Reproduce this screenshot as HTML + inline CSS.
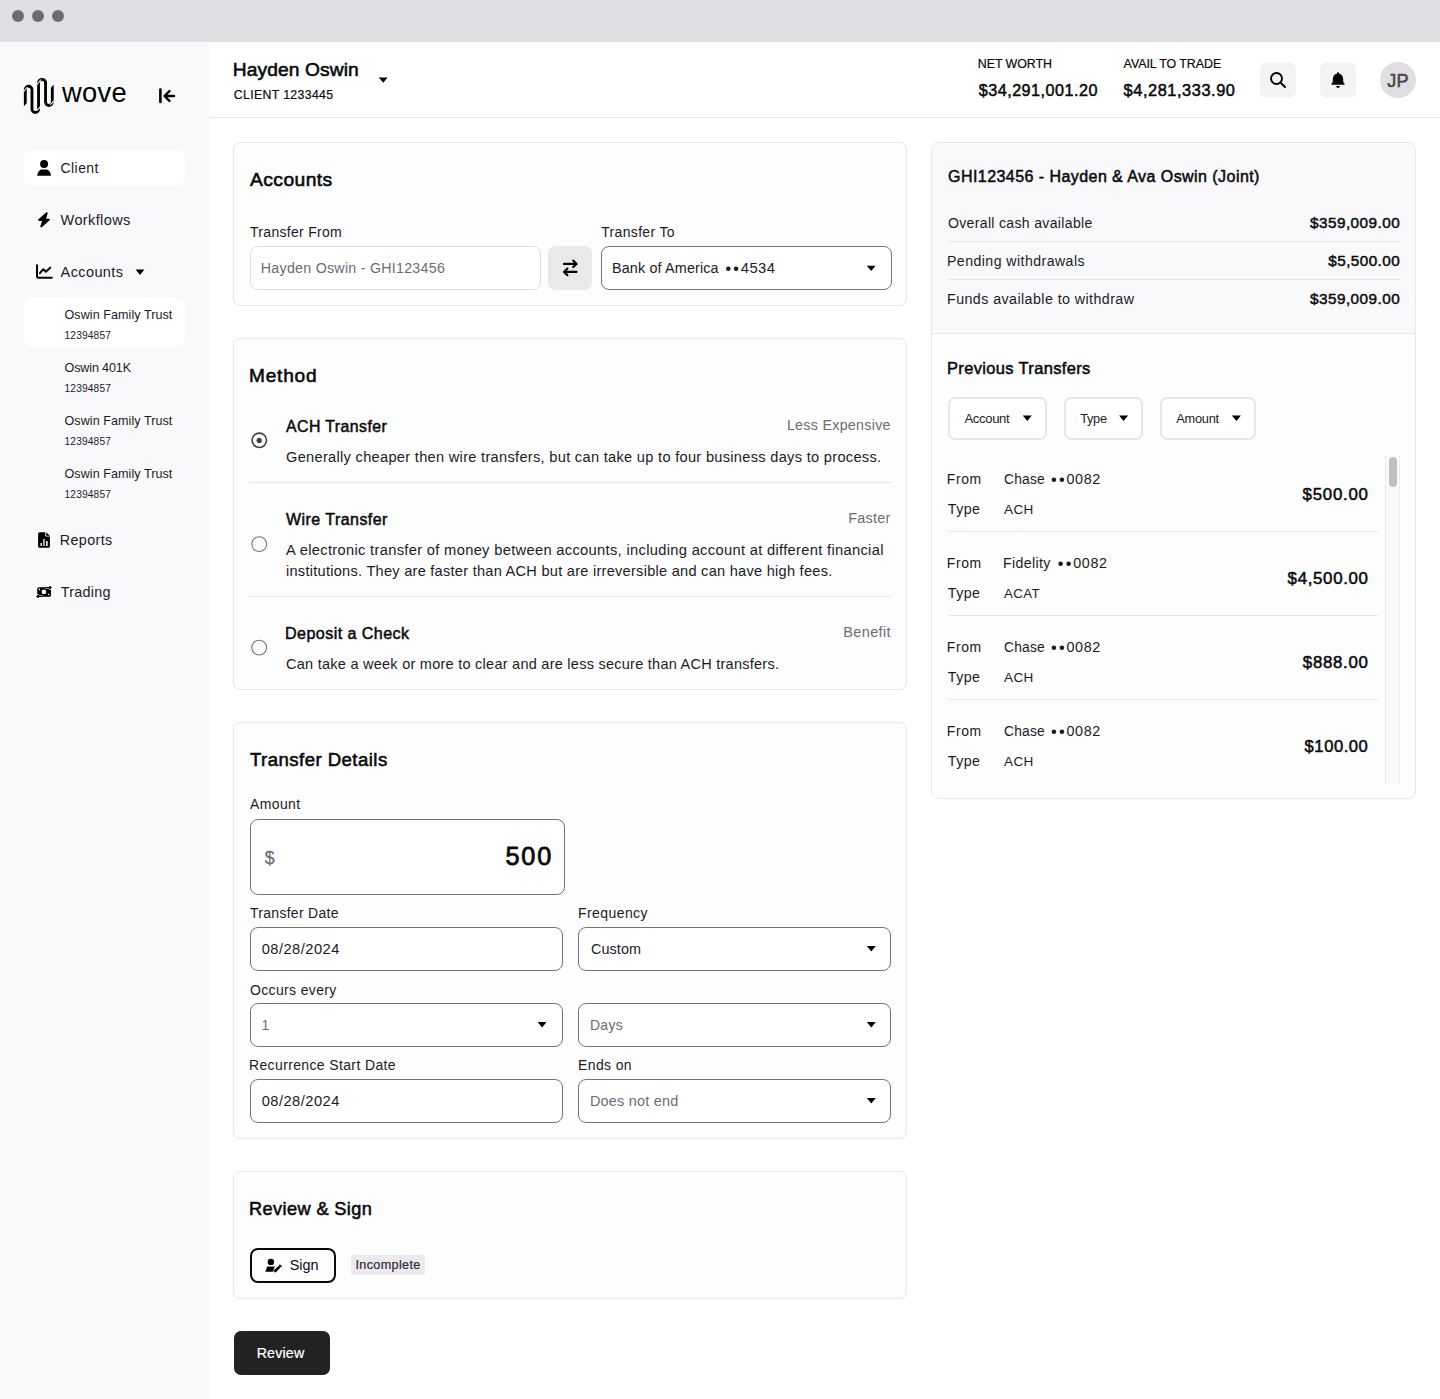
<!DOCTYPE html>
<html><head><meta charset="utf-8"><title>Transfer</title>
<style>
html,body{margin:0;padding:0}
body{width:1440px;height:1399px;position:relative;overflow:hidden;background:#ffffff;font-family:"Liberation Sans",sans-serif}
.t{position:absolute;white-space:nowrap;font-family:"Liberation Sans",sans-serif}
.a{position:absolute;box-sizing:border-box}
.card{position:absolute;box-sizing:border-box;border:1px solid #e8e8eb;border-radius:7px;background:#fdfdfd}
.inp{position:absolute;box-sizing:border-box;border:1px solid #76727d;border-radius:8px;background:#fff}
.hr{position:absolute;height:1px;background:#e6e6e9}
svg{position:absolute;overflow:visible}

</style></head>
<body>
<!-- title bar -->
<div class="a" style="left:0;top:0;width:1440px;height:42px;background:#e1dfe4"></div>
<div class="a" style="left:12px;top:10px;width:12px;height:12px;border-radius:50%;background:#6e6a75"></div>
<div class="a" style="left:32px;top:10px;width:12px;height:12px;border-radius:50%;background:#6e6a75"></div>
<div class="a" style="left:52px;top:10px;width:12px;height:12px;border-radius:50%;background:#6e6a75"></div>
<!-- sidebar -->
<div class="a" style="left:0;top:42px;width:209px;height:1357px;background:#f9f9fb"></div>
<!-- logo -->
<svg style="left:0;top:0" width="200" height="130">
  <path d="M25.3,108 L25.3,89.65 A3.35,3.35 0 0 1 32,89.65 L32,109.25 A3.275,3.275 0 0 0 38.55,109.25 L38.55,82.8 A3.5,3.5 0 0 1 45.55,82.8 L45.55,102.1 A3.375,3.375 0 0 0 52.3,102.1 L52.3,83" fill="none" stroke="#000" stroke-width="2.85"/>
  <path d="M23.4,92 L27.4,87 M36.7,110.6 L40.3,106.8 M36.6,85 L40.9,79.6 M50.4,104.6 L54,100.8" stroke="#f9f9fb" stroke-width="1.15"/>
  <path d="M22,107.9 L28,101.9 L28,112 L22,112 Z M49.5,89.1 L55.5,83.1 L55.5,80 L49.5,80 Z" fill="#f9f9fb"/>
</svg>
<svg style="left:0;top:0" width="200" height="130">
  <path d="M160.4,89.5 L160.4,102" stroke="#000" stroke-width="2.6" stroke-linecap="round"/>
  <path d="M174,96 L165,96 M169.5,91 L164.5,96 L169.5,101" fill="none" stroke="#000" stroke-width="2.4" stroke-linecap="round" stroke-linejoin="round"/>
</svg>
<!-- nav highlight -->
<div class="a" style="left:24px;top:150px;width:161px;height:35.5px;border-radius:8px;background:#ffffff"></div>
<div class="a" style="left:24px;top:298px;width:161px;height:48.5px;border-radius:8px;background:#ffffff"></div>
<!-- nav icons -->
<svg style="left:0;top:0" width="209" height="620">
  <circle cx="44.1" cy="163.9" r="4" fill="#000"/>
  <path d="M37.2,175.8 C37.6,172 39.8,169.6 42,169.6 L46.2,169.6 C48.4,169.6 50.6,172 51,175.8 Z" fill="#000"/>
  <path d="M46.8,213.1 L39,220 L43.3,220 L41.2,226.5 L49,219.6 L45,219.6 Z" fill="#000" stroke="#000" stroke-width="1.8" stroke-linejoin="round"/>
  <path d="M37,265.2 L37,276.6 Q37,277.8 38.2,277.8 L51.8,277.8" fill="none" stroke="#000" stroke-width="2" stroke-linecap="round"/>
  <path d="M39.9,273.1 L43.3,269.2 L45.9,271.8 L50.2,267.6" fill="none" stroke="#000" stroke-width="2" stroke-linecap="round" stroke-linejoin="round"/>
  <path d="M135.6,269.4 L144.4,269.4 L140,275 Z" fill="#000"/>
  <!-- report -->
  <path d="M39.6,532.2 L45.2,532.2 L45.2,535.6 Q45.2,536.6 46.2,536.6 L49.9,536.6 L49.9,546.2 Q49.9,547.7 48.4,547.7 L39.6,547.7 Q38.1,547.7 38.1,546.2 L38.1,533.7 Q38.1,532.2 39.6,532.2 Z" fill="#000"/>
  <path d="M46.2,532.2 L49.9,535.8 L46.2,535.8 Z" fill="#000"/>
  <rect x="40.5" y="543" width="1.4" height="3" fill="#f9f9fb"/>
  <rect x="43.2" y="539" width="1.6" height="7" fill="#d0d0d0"/>
  <rect x="46.1" y="541" width="1.6" height="5" fill="#f9f9fb"/>
  <!-- trading -->
  <rect x="37.2" y="587.2" width="13.8" height="9.6" rx="1.6" fill="#000"/>
  <circle cx="43.9" cy="591.9" r="2.3" fill="#f9f9fb"/>
  <circle cx="39.3" cy="589.4" r="0.8" fill="#f9f9fb"/>
  <circle cx="48.7" cy="594.5" r="0.8" fill="#f9f9fb"/>
  <path d="M45.5,587.6 L51,587.6 M49.2,585.9 L51.2,587.6 L49.2,589.3" fill="none" stroke="#f9f9fb" stroke-width="2.4"/>
  <path d="M45.5,587.6 L51,587.6 M49.4,586.2 L51.2,587.6 L49.4,589" fill="none" stroke="#000" stroke-width="1.2" stroke-linejoin="round"/>
  <path d="M42.8,596.4 L37,596.4 M38.8,594.8 L36.8,596.4 L38.8,598" fill="none" stroke="#f9f9fb" stroke-width="2.4"/>
  <path d="M42.8,596.4 L37,596.4 M38.6,595 L36.8,596.4 L38.6,597.8" fill="none" stroke="#000" stroke-width="1.2" stroke-linejoin="round"/>
</svg>
<!-- header -->
<div class="hr" style="left:209px;top:117px;width:1231px;background:#e8e8eb"></div>
<svg style="left:0;top:0" width="1440" height="120">
  <path d="M378.8,77.5 L387.6,77.5 L383.2,82.8 Z" fill="#000"/>
</svg>
<div class="a" style="left:1260px;top:62px;width:36px;height:36px;border-radius:7px;background:#f3f3f5"></div>
<div class="a" style="left:1320px;top:62px;width:36px;height:36px;border-radius:7px;background:#f3f3f5"></div>
<div class="a" style="left:1380px;top:62px;width:36px;height:36px;border-radius:50%;background:#e0dee3"></div>
<svg style="left:0;top:0" width="1440" height="120">
  <circle cx="1276.5" cy="78.5" r="5.5" fill="none" stroke="#000" stroke-width="1.9"/>
  <path d="M1280.8,82.9 L1285,87" stroke="#000" stroke-width="2" stroke-linecap="round"/>
  <path d="M1338,72.3 C1338.7,72.3 1338.9,72.8 1338.9,73.6 C1341.6,74.2 1343.2,76.6 1343.2,79.5 L1343.3,82 Q1343.6,83 1344.6,83.6 Q1345,84.7 1344,84.7 L1332,84.7 Q1331,84.7 1331.4,83.6 Q1332.4,83 1332.7,82 L1332.8,79.5 C1332.8,76.6 1334.4,74.2 1337.1,73.6 C1337.1,72.8 1337.3,72.3 1338,72.3 Z" fill="#000"/>
  <path d="M1336.1,86 L1339.9,86 Q1339.4,88 1338,88 Q1336.6,88 1336.1,86 Z" fill="#000"/>
</svg>
<!-- cards -->
<div class="card" style="left:233px;top:142px;width:674px;height:164px"></div>
<div class="card" style="left:233px;top:338px;width:674px;height:352px"></div>
<div class="card" style="left:233px;top:722px;width:674px;height:417px"></div>
<div class="card" style="left:233px;top:1171px;width:674px;height:128px"></div>
<!-- accounts inputs -->
<div class="inp" style="left:249.5px;top:246px;width:291px;height:44px;border-color:#dedde2"></div>
<div class="a" style="left:548px;top:246px;width:44px;height:44px;border-radius:8px;background:#e9e9ec"></div>
<div class="inp" style="left:600.5px;top:246px;width:291px;height:44px"></div>
<svg style="left:0;top:0" width="1440" height="320">
  <path d="M564,263.9 L576.5,263.9 M573.2,260.6 L576.6,263.9 L573.2,267.1" fill="none" stroke="#000" stroke-width="2.1" stroke-linecap="round" stroke-linejoin="round"/>
  <path d="M576.5,271.9 L564,271.9 M567.4,268.6 L564,271.9 L567.4,275.2" fill="none" stroke="#000" stroke-width="2.1" stroke-linecap="round" stroke-linejoin="round"/>
  <path d="M866.8,265.8 L875.6,265.8 L871.2,270.9 Z" fill="#000"/>
</svg>
<!-- method -->
<div class="hr" style="left:249px;top:482px;width:642px"></div>
<div class="hr" style="left:249px;top:596px;width:642px"></div>
<svg style="left:0;top:0" width="1440" height="700">
  <circle cx="259.3" cy="440.3" r="7.2" fill="none" stroke="#3f3f44" stroke-width="1.6"/>
  <circle cx="259.2" cy="440.4" r="2.6" fill="#3f3f44"/>
  <circle cx="259.2" cy="544.1" r="7.4" fill="none" stroke="#77737e" stroke-width="1.1"/>
  <circle cx="259.2" cy="647.6" r="7.4" fill="none" stroke="#77737e" stroke-width="1.1"/>
</svg>
<!-- transfer details -->
<div class="inp" style="left:249.5px;top:818.5px;width:315px;height:76.5px"></div>
<div class="inp" style="left:249.5px;top:927px;width:313px;height:44px"></div>
<div class="inp" style="left:578px;top:927px;width:313px;height:44px"></div>
<div class="inp" style="left:249.5px;top:1003px;width:313px;height:44px"></div>
<div class="inp" style="left:578px;top:1003px;width:313px;height:44px"></div>
<div class="inp" style="left:249.5px;top:1079px;width:313px;height:44px"></div>
<div class="inp" style="left:578px;top:1079px;width:313px;height:44px"></div>
<svg style="left:0;top:0" width="1440" height="1200">
  <path d="M866.8,946 L875.8,946 L871.3,951.5 Z" fill="#000"/>
  <path d="M537.6,1022 L546.6,1022 L542.1,1027.5 Z" fill="#000"/>
  <path d="M866.8,1022 L875.8,1022 L871.3,1027.5 Z" fill="#000"/>
  <path d="M866.8,1098 L875.8,1098 L871.3,1103.5 Z" fill="#000"/>
</svg>
<!-- review & sign -->
<div class="a" style="left:249.5px;top:1247.5px;width:86px;height:35px;border:2px solid #0c0c0e;border-radius:8px"></div>
<div class="a" style="left:351.4px;top:1255.2px;width:73.8px;height:19.5px;border-radius:2px;background:#ebeaed"></div>
<svg style="left:0;top:0" width="1440" height="1300">
  <circle cx="270.9" cy="1261.9" r="3.2" fill="#000"/>
  <path d="M267.2,1266.5 L274.9,1266.5 L273,1271.8 L265.3,1271.8 Z" fill="#000"/>
  <path d="M275.2,1271 L278.8,1267.3" stroke="#000" stroke-width="2.6" stroke-linecap="round"/>
  <path d="M279.8,1265.3 L281,1266.5" stroke="#000" stroke-width="1.6" stroke-linecap="round"/>
</svg>
<div class="a" style="left:233.5px;top:1331px;width:96.5px;height:44px;border-radius:7px;background:#222222"></div>
<!-- right panel -->
<div class="card" style="left:931px;top:142px;width:485px;height:657px;background:#fdfdfd;overflow:hidden">
  <div class="a" style="left:0;top:0;width:483px;height:191px;background:#f9f9fb;border-bottom:1px solid #e8e8eb"></div>
</div>
<div class="hr" style="left:947.5px;top:241px;width:452px"></div>
<div class="hr" style="left:947.5px;top:279px;width:452px"></div>
<div class="a" style="left:948px;top:396.5px;width:99px;height:43px;border:2px solid #e7e7ea;border-radius:7px;background:#fff"></div>
<div class="a" style="left:1064px;top:396.5px;width:78.5px;height:43px;border:2px solid #e7e7ea;border-radius:7px;background:#fff"></div>
<div class="a" style="left:1160px;top:396.5px;width:95.5px;height:43px;border:2px solid #e7e7ea;border-radius:7px;background:#fff"></div>
<svg style="left:0;top:0" width="1440" height="800">
  <path d="M1022.8,415.6 L1031.8,415.6 L1027.3,420.9 Z" fill="#000"/>
  <path d="M1119.1,415.6 L1128.1,415.6 L1123.6,420.9 Z" fill="#000"/>
  <path d="M1231.9,415.6 L1240.9,415.6 L1236.4,420.9 Z" fill="#000"/>
</svg>
<div class="hr" style="left:947.5px;top:531px;width:430px"></div>
<div class="hr" style="left:947.5px;top:615px;width:430px"></div>
<div class="hr" style="left:947.5px;top:699px;width:430px"></div>
<!-- scrollbar -->
<div class="a" style="left:1385px;top:456px;width:15px;height:328px;background:#fafafa;border-left:1px solid #e8e8e8;border-right:1px solid #efefef"></div>
<div class="a" style="left:1389px;top:457px;width:8px;height:30px;border-radius:4px;background:#c1c1c1"></div>

<svg style="left:0;top:0" width="1440" height="800"><circle cx="728.30" cy="268.80" r="2.3" fill="#1c1b1f"/><circle cx="736.10" cy="268.80" r="2.3" fill="#1c1b1f"/><circle cx="1053.90" cy="479.70" r="2.3" fill="#1c1b1f"/><circle cx="1061.90" cy="479.70" r="2.3" fill="#1c1b1f"/><circle cx="1060.60" cy="563.70" r="2.3" fill="#1c1b1f"/><circle cx="1068.60" cy="563.70" r="2.3" fill="#1c1b1f"/><circle cx="1053.90" cy="647.70" r="2.3" fill="#1c1b1f"/><circle cx="1061.90" cy="647.70" r="2.3" fill="#1c1b1f"/><circle cx="1053.90" cy="731.70" r="2.3" fill="#1c1b1f"/><circle cx="1061.90" cy="731.70" r="2.3" fill="#1c1b1f"/></svg>
<div class="t" style="left:60.60px;top:162.10px;font-size:13.97px;line-height:13.97px;font-weight:400;color:#1c1b1f;letter-spacing:0.414px">Client</div>
<div class="t" style="left:60.60px;top:213.20px;font-size:14.54px;line-height:14.54px;font-weight:400;color:#1c1b1f;letter-spacing:0.365px">Workflows</div>
<div class="t" style="left:60.60px;top:265.00px;font-size:14.54px;line-height:14.54px;font-weight:400;color:#1c1b1f;letter-spacing:0.378px">Accounts</div>
<div class="t" style="left:64.50px;top:309.20px;font-size:12.57px;line-height:12.57px;font-weight:400;color:#1c1b1f;letter-spacing:0.057px">Oswin Family Trust</div>
<div class="t" style="left:64.50px;top:331.00px;font-size:10.2px;line-height:10.2px;font-weight:400;color:#1c1b1f;letter-spacing:0.148px">12394857</div>
<div class="t" style="left:64.50px;top:362.20px;font-size:12.57px;line-height:12.57px;font-weight:400;color:#1c1b1f;letter-spacing:-0.128px">Oswin 401K</div>
<div class="t" style="left:64.50px;top:384.00px;font-size:10.2px;line-height:10.2px;font-weight:400;color:#1c1b1f;letter-spacing:0.148px">12394857</div>
<div class="t" style="left:64.50px;top:415.20px;font-size:12.57px;line-height:12.57px;font-weight:400;color:#1c1b1f;letter-spacing:0.057px">Oswin Family Trust</div>
<div class="t" style="left:64.50px;top:437.00px;font-size:10.2px;line-height:10.2px;font-weight:400;color:#1c1b1f;letter-spacing:0.148px">12394857</div>
<div class="t" style="left:64.50px;top:468.20px;font-size:12.57px;line-height:12.57px;font-weight:400;color:#1c1b1f;letter-spacing:0.057px">Oswin Family Trust</div>
<div class="t" style="left:64.50px;top:490.00px;font-size:10.2px;line-height:10.2px;font-weight:400;color:#1c1b1f;letter-spacing:0.148px">12394857</div>
<div class="t" style="left:59.70px;top:532.80px;font-size:14.32px;line-height:14.32px;font-weight:400;color:#1c1b1f;letter-spacing:0.407px">Reports</div>
<div class="t" style="left:60.70px;top:584.70px;font-size:14.36px;line-height:14.36px;font-weight:400;color:#1c1b1f;letter-spacing:0.255px">Trading</div>
<div class="t" style="left:232.75px;top:60.25px;font-size:19.2px;line-height:19.2px;font-weight:400;-webkit-text-stroke:0.6px #0a0a0c;color:#0a0a0c;letter-spacing:0.104px">Hayden Oswin</div>
<div class="t" style="left:233.80px;top:88.90px;font-size:12.29px;line-height:12.29px;font-weight:400;-webkit-text-stroke:0.2px #0a0a0c;color:#0a0a0c;letter-spacing:0.356px">CLIENT 1233445</div>
<div class="t" style="left:977.75px;top:58.10px;font-size:12.43px;line-height:12.43px;font-weight:400;-webkit-text-stroke:0.2px #0a0a0c;color:#0a0a0c;letter-spacing:-0.058px">NET WORTH</div>
<div class="t" style="left:978.75px;top:81.70px;font-size:16.18px;line-height:16.18px;font-weight:400;-webkit-text-stroke:0.5px #0a0a0c;color:#0a0a0c;letter-spacing:0.479px">$34,291,001.20</div>
<div class="t" style="left:1123.60px;top:58.10px;font-size:12.43px;line-height:12.43px;font-weight:400;-webkit-text-stroke:0.2px #0a0a0c;color:#0a0a0c;letter-spacing:-0.070px">AVAIL TO TRADE</div>
<div class="t" style="left:1123.60px;top:81.70px;font-size:16.35px;line-height:16.35px;font-weight:400;-webkit-text-stroke:0.51px #0a0a0c;color:#0a0a0c;letter-spacing:0.564px">$4,281,333.90</div>
<div class="t" style="left:1387.25px;top:71.90px;font-size:18.02px;line-height:18.02px;font-weight:400;-webkit-text-stroke:0.56px #4a4553;color:#4a4553;letter-spacing:0.242px">JP</div>
<div class="t" style="left:250.00px;top:170.20px;font-size:19.25px;line-height:19.25px;font-weight:400;-webkit-text-stroke:0.6px #0a0a0c;color:#0a0a0c;letter-spacing:0.435px">Accounts</div>
<div class="t" style="left:250.00px;top:225.70px;font-size:13.97px;line-height:13.97px;font-weight:400;color:#1c1b1f;letter-spacing:0.315px">Transfer From</div>
<div class="t" style="left:260.80px;top:260.90px;font-size:14.25px;line-height:14.25px;font-weight:400;color:#6e6b75;letter-spacing:0.253px">Hayden Oswin - GHI123456</div>
<div class="t" style="left:601.25px;top:226.00px;font-size:13.97px;line-height:13.97px;font-weight:400;color:#1c1b1f;letter-spacing:0.340px">Transfer To</div>
<div class="t" style="left:612.00px;top:261.00px;font-size:14.39px;line-height:14.39px;font-weight:400;color:#1c1b1f;letter-spacing:0.138px">Bank of America</div>
<div class="t" style="left:740.80px;top:261.00px;font-size:14.82px;line-height:14.82px;font-weight:400;color:#1c1b1f;letter-spacing:0.395px">4534</div>
<div class="t" style="left:249.00px;top:366.10px;font-size:19.09px;line-height:19.09px;font-weight:400;-webkit-text-stroke:0.59px #0a0a0c;color:#0a0a0c;letter-spacing:0.795px">Method</div>
<div class="t" style="left:286.00px;top:418.70px;font-size:15.85px;line-height:15.85px;font-weight:400;-webkit-text-stroke:0.49px #0a0a0c;color:#0a0a0c;letter-spacing:0.438px">ACH Transfer</div>
<div class="t" style="left:786.90px;top:418.20px;font-size:14.25px;line-height:14.25px;font-weight:400;color:#6e6b75;letter-spacing:0.294px">Less Expensive</div>
<div class="t" style="left:286.00px;top:449.90px;font-size:14.62px;line-height:14.62px;font-weight:400;color:#1c1b1f;letter-spacing:0.297px">Generally cheaper then wire transfers, but can take up to four business days to process.</div>
<div class="t" style="left:286.00px;top:512.00px;font-size:15.98px;line-height:15.98px;font-weight:400;-webkit-text-stroke:0.5px #0a0a0c;color:#0a0a0c;letter-spacing:0.467px">Wire Transfer</div>
<div class="t" style="left:848.30px;top:510.80px;font-size:14.39px;line-height:14.39px;font-weight:400;color:#6e6b75;letter-spacing:0.270px">Faster</div>
<div class="t" style="left:286.00px;top:542.90px;font-size:14.69px;line-height:14.69px;font-weight:400;color:#1c1b1f;letter-spacing:0.316px">A electronic transfer of money between accounts, including account at different financial</div>
<div class="t" style="left:286.00px;top:563.80px;font-size:14.57px;line-height:14.57px;font-weight:400;color:#1c1b1f;letter-spacing:0.268px">institutions. They are faster than ACH but are irreversible and can have high fees.</div>
<div class="t" style="left:285.00px;top:625.00px;font-size:16.11px;line-height:16.11px;font-weight:400;-webkit-text-stroke:0.5px #0a0a0c;color:#0a0a0c;letter-spacing:0.419px">Deposit a Check</div>
<div class="t" style="left:843.20px;top:625.10px;font-size:14.59px;line-height:14.59px;font-weight:400;color:#6e6b75;letter-spacing:0.344px">Benefit</div>
<div class="t" style="left:286.00px;top:657.00px;font-size:14.51px;line-height:14.51px;font-weight:400;color:#1c1b1f;letter-spacing:0.257px">Can take a week or more to clear and are less secure than ACH transfers.</div>
<div class="t" style="left:250.00px;top:751.00px;font-size:18.61px;line-height:18.61px;font-weight:400;-webkit-text-stroke:0.58px #0a0a0c;color:#0a0a0c;letter-spacing:0.437px">Transfer Details</div>
<div class="t" style="left:250.00px;top:798.00px;font-size:13.97px;line-height:13.97px;font-weight:400;color:#1c1b1f;letter-spacing:0.388px">Amount</div>
<div class="t" style="left:264.80px;top:850.20px;font-size:17.6px;line-height:17.6px;font-weight:400;-webkit-text-stroke:0.28px #6e6b75;color:#6e6b75;letter-spacing:0.000px">$</div>
<div class="t" style="left:505.40px;top:843.70px;font-size:25.34px;line-height:25.34px;font-weight:400;-webkit-text-stroke:0.79px #0a0a0c;color:#0a0a0c;letter-spacing:1.814px">500</div>
<div class="t" style="left:250.00px;top:907.20px;font-size:13.97px;line-height:13.97px;font-weight:400;color:#1c1b1f;letter-spacing:0.299px">Transfer Date</div>
<div class="t" style="left:578.10px;top:907.10px;font-size:13.97px;line-height:13.97px;font-weight:400;color:#1c1b1f;letter-spacing:0.423px">Frequency</div>
<div class="t" style="left:261.70px;top:942.30px;font-size:14.7px;line-height:14.7px;font-weight:400;color:#1c1b1f;letter-spacing:0.462px">08/28/2024</div>
<div class="t" style="left:590.90px;top:942.20px;font-size:14.37px;line-height:14.37px;font-weight:400;color:#1c1b1f;letter-spacing:0.138px">Custom</div>
<div class="t" style="left:250.00px;top:983.50px;font-size:13.97px;line-height:13.97px;font-weight:400;color:#1c1b1f;letter-spacing:0.364px">Occurs every</div>
<div class="t" style="left:261.40px;top:1019.30px;font-size:13.97px;line-height:13.97px;font-weight:400;color:#6e6b75;letter-spacing:0.000px">1</div>
<div class="t" style="left:589.90px;top:1019.00px;font-size:13.97px;line-height:13.97px;font-weight:400;color:#6e6b75;letter-spacing:0.320px">Days</div>
<div class="t" style="left:249.00px;top:1059.00px;font-size:13.97px;line-height:13.97px;font-weight:400;color:#1c1b1f;letter-spacing:0.380px">Recurrence Start Date</div>
<div class="t" style="left:578.10px;top:1058.80px;font-size:13.97px;line-height:13.97px;font-weight:400;color:#1c1b1f;letter-spacing:0.369px">Ends on</div>
<div class="t" style="left:261.70px;top:1094.00px;font-size:14.7px;line-height:14.7px;font-weight:400;color:#1c1b1f;letter-spacing:0.462px">08/28/2024</div>
<div class="t" style="left:589.90px;top:1093.70px;font-size:14.48px;line-height:14.48px;font-weight:400;color:#6e6b75;letter-spacing:0.207px">Does not end</div>
<div class="t" style="left:249.00px;top:1199.90px;font-size:18.17px;line-height:18.17px;font-weight:400;-webkit-text-stroke:0.56px #0a0a0c;color:#0a0a0c;letter-spacing:0.402px">Review &amp; Sign</div>
<div class="t" style="left:289.70px;top:1258.00px;font-size:14.38px;line-height:14.38px;font-weight:400;color:#0a0a0c;letter-spacing:0.008px">Sign</div>
<div class="t" style="left:355.40px;top:1259.00px;font-size:12.57px;line-height:12.57px;font-weight:400;-webkit-text-stroke:0.2px #321d40;color:#321d40;letter-spacing:0.382px">Incomplete</div>
<div class="t" style="left:256.70px;top:1345.80px;font-size:14.19px;line-height:14.19px;font-weight:400;-webkit-text-stroke:0.23px #ffffff;color:#ffffff;letter-spacing:0.186px">Review</div>
<div class="t" style="left:948.00px;top:167.70px;font-size:16.05px;line-height:16.05px;font-weight:400;-webkit-text-stroke:0.5px #0a0a0c;color:#0a0a0c;letter-spacing:0.430px">GHI123456 - Hayden &amp; Ava Oswin (Joint)</div>
<div class="t" style="left:948.00px;top:216.30px;font-size:14.04px;line-height:14.04px;font-weight:400;color:#1c1b1f;letter-spacing:0.335px">Overall cash available</div>
<div class="t" style="left:1310.00px;top:215.30px;font-size:15.3px;line-height:15.3px;font-weight:400;-webkit-text-stroke:0.47px #0a0a0c;color:#0a0a0c;letter-spacing:0.464px">$359,009.00</div>
<div class="t" style="left:947.00px;top:253.80px;font-size:14.12px;line-height:14.12px;font-weight:400;color:#1c1b1f;letter-spacing:0.453px">Pending withdrawals</div>
<div class="t" style="left:1328.30px;top:252.80px;font-size:15.25px;line-height:15.25px;font-weight:400;-webkit-text-stroke:0.47px #0a0a0c;color:#0a0a0c;letter-spacing:0.442px">$5,500.00</div>
<div class="t" style="left:947.00px;top:292.20px;font-size:14.23px;line-height:14.23px;font-weight:400;color:#1c1b1f;letter-spacing:0.443px">Funds available to withdraw</div>
<div class="t" style="left:1310.00px;top:291.20px;font-size:15.3px;line-height:15.3px;font-weight:400;-webkit-text-stroke:0.47px #0a0a0c;color:#0a0a0c;letter-spacing:0.464px">$359,009.00</div>
<div class="t" style="left:947.00px;top:360.20px;font-size:16.48px;line-height:16.48px;font-weight:400;-webkit-text-stroke:0.51px #0a0a0c;color:#0a0a0c;letter-spacing:0.356px">Previous Transfers</div>
<div class="t" style="left:964.50px;top:412.10px;font-size:13.13px;line-height:13.13px;font-weight:400;color:#1c1b1f;letter-spacing:-0.380px">Account</div>
<div class="t" style="left:1080.20px;top:413.10px;font-size:12.79px;line-height:12.79px;font-weight:400;color:#1c1b1f;letter-spacing:-0.300px">Type</div>
<div class="t" style="left:1176.30px;top:413.10px;font-size:12.79px;line-height:12.79px;font-weight:400;color:#1c1b1f;letter-spacing:-0.259px">Amount</div>
<div class="t" style="left:946.80px;top:472.75px;font-size:13.91px;line-height:13.91px;font-weight:400;color:#1c1b1f;letter-spacing:0.647px">From</div>
<div class="t" style="left:1004.00px;top:472.75px;font-size:13.82px;line-height:13.82px;font-weight:400;color:#1c1b1f;letter-spacing:0.214px">Chase</div>
<div class="t" style="left:1066.50px;top:471.75px;font-size:14.33px;line-height:14.33px;font-weight:400;color:#1c1b1f;letter-spacing:0.631px">0082</div>
<div class="t" style="left:947.80px;top:501.90px;font-size:14.19px;line-height:14.19px;font-weight:400;color:#1c1b1f;letter-spacing:0.477px">Type</div>
<div class="t" style="left:1004.00px;top:502.90px;font-size:13.55px;line-height:13.55px;font-weight:400;color:#1c1b1f;letter-spacing:0.391px">ACH</div>
<div class="t" style="left:1302.60px;top:486.80px;font-size:16.85px;line-height:16.85px;font-weight:400;-webkit-text-stroke:0.52px #0a0a0c;color:#0a0a0c;letter-spacing:0.747px">$500.00</div>
<div class="t" style="left:946.80px;top:556.75px;font-size:13.91px;line-height:13.91px;font-weight:400;color:#1c1b1f;letter-spacing:0.647px">From</div>
<div class="t" style="left:1003.00px;top:555.75px;font-size:14.22px;line-height:14.22px;font-weight:400;color:#1c1b1f;letter-spacing:0.339px">Fidelity</div>
<div class="t" style="left:1073.20px;top:555.75px;font-size:14.33px;line-height:14.33px;font-weight:400;color:#1c1b1f;letter-spacing:0.631px">0082</div>
<div class="t" style="left:947.80px;top:585.90px;font-size:14.19px;line-height:14.19px;font-weight:400;color:#1c1b1f;letter-spacing:0.477px">Type</div>
<div class="t" style="left:1004.00px;top:586.90px;font-size:13.27px;line-height:13.27px;font-weight:400;color:#1c1b1f;letter-spacing:0.370px">ACAT</div>
<div class="t" style="left:1287.60px;top:570.80px;font-size:16.86px;line-height:16.86px;font-weight:400;-webkit-text-stroke:0.52px #0a0a0c;color:#0a0a0c;letter-spacing:0.672px">$4,500.00</div>
<div class="t" style="left:946.80px;top:640.75px;font-size:13.91px;line-height:13.91px;font-weight:400;color:#1c1b1f;letter-spacing:0.647px">From</div>
<div class="t" style="left:1004.00px;top:640.75px;font-size:13.82px;line-height:13.82px;font-weight:400;color:#1c1b1f;letter-spacing:0.214px">Chase</div>
<div class="t" style="left:1066.50px;top:639.75px;font-size:14.33px;line-height:14.33px;font-weight:400;color:#1c1b1f;letter-spacing:0.631px">0082</div>
<div class="t" style="left:947.80px;top:669.90px;font-size:14.19px;line-height:14.19px;font-weight:400;color:#1c1b1f;letter-spacing:0.477px">Type</div>
<div class="t" style="left:1004.00px;top:670.90px;font-size:13.55px;line-height:13.55px;font-weight:400;color:#1c1b1f;letter-spacing:0.391px">ACH</div>
<div class="t" style="left:1302.80px;top:654.80px;font-size:16.83px;line-height:16.83px;font-weight:400;-webkit-text-stroke:0.52px #0a0a0c;color:#0a0a0c;letter-spacing:0.722px">$888.00</div>
<div class="t" style="left:946.80px;top:724.75px;font-size:13.91px;line-height:13.91px;font-weight:400;color:#1c1b1f;letter-spacing:0.647px">From</div>
<div class="t" style="left:1004.00px;top:724.75px;font-size:13.82px;line-height:13.82px;font-weight:400;color:#1c1b1f;letter-spacing:0.214px">Chase</div>
<div class="t" style="left:1066.50px;top:723.75px;font-size:14.33px;line-height:14.33px;font-weight:400;color:#1c1b1f;letter-spacing:0.631px">0082</div>
<div class="t" style="left:947.80px;top:753.90px;font-size:14.19px;line-height:14.19px;font-weight:400;color:#1c1b1f;letter-spacing:0.477px">Type</div>
<div class="t" style="left:1004.00px;top:754.90px;font-size:13.55px;line-height:13.55px;font-weight:400;color:#1c1b1f;letter-spacing:0.391px">ACH</div>
<div class="t" style="left:1304.60px;top:739.00px;font-size:16.58px;line-height:16.58px;font-weight:400;-webkit-text-stroke:0.51px #0a0a0c;color:#0a0a0c;letter-spacing:0.549px">$100.00</div>
<div class="t" style="left:61.90px;top:79.10px;font-size:27.3px;line-height:27.3px;font-weight:400;color:#000;letter-spacing:0.319px">wove</div>
</body></html>
